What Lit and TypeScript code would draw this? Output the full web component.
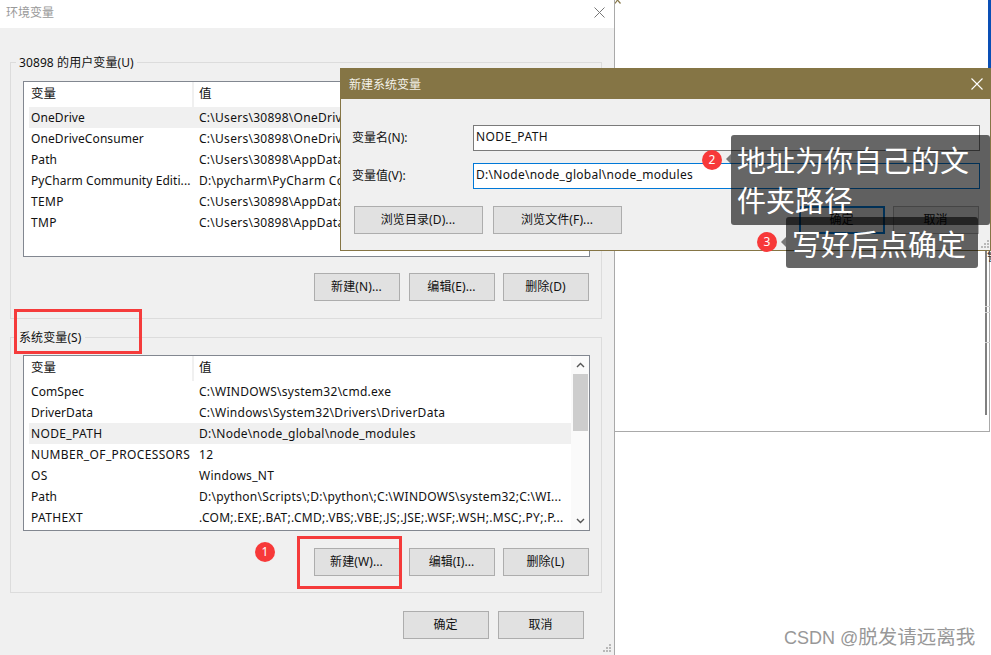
import { LitElement, html, css } from "lit";
import { customElement } from "lit/decorators.js";

const userVars: [string, string][] = [
  ["OneDrive", "C:\\Users\\30898\\OneDrive"],
  ["OneDriveConsumer", "C:\\Users\\30898\\OneDrive"],
  ["Path", "C:\\Users\\30898\\AppData\\Local\\Programs"],
  ["PyCharm Community Editi...", "D:\\pycharm\\PyCharm Community Edition"],
  ["TEMP", "C:\\Users\\30898\\AppData\\Local\\Temp"],
  ["TMP", "C:\\Users\\30898\\AppData\\Local\\Temp"],
];
const sysVars: [string, string][] = [
  ["ComSpec", "C:\\WINDOWS\\system32\\cmd.exe"],
  ["DriverData", "C:\\Windows\\System32\\Drivers\\DriverData"],
  ["NODE_PATH", "D:\\Node\\node_global\\node_modules"],
  ["NUMBER_OF_PROCESSORS", "12"],
  ["OS", "Windows_NT"],
  ["Path", "D:\\python\\Scripts\\;D:\\python\\;C:\\WINDOWS\\system32;C:\\WI..."],
  ["PATHEXT", ".COM;.EXE;.BAT;.CMD;.VBS;.VBE;.JS;.JSE;.WSF;.WSH;.MSC;.PY;.P..."],
];

@customElement("app-root")
export class AppRoot extends LitElement {
  static styles = css`
    :host {
      display: block;
      width: 991px;
      height: 655px;
      position: relative;
      overflow: hidden;
      background: #fff;
      font-family: "Noto Sans", "Noto Sans CJK SC", sans-serif;
      font-size: 12px;
      color: #111;
    }
    * { box-sizing: border-box; }
    .main {
      width: 615px;
      height: 655px;
      border-right: 1px solid #a9a9a9;
      background: #f0f0f0;
      display: flex;
      flex-direction: column;
      position: relative;
    }
    .main-title {
      height: 28px;
      flex: none;
      background: #fff;
      color: #999;
      padding: 0 0 4px 6px;
      display: flex;
      align-items: center;
      justify-content: space-between;
      font-size: 12px;
    }
    .main-title svg { margin-right: 9px; }
    .main-body { padding: 26px 0 0 10px; flex: 1; }
    .group {
      width: 592px;
      margin: 0;
      border: 1px solid #dcdcdc;
      padding: 10px 12px 18px;
      min-inline-size: 0;
    }
    .group.first { padding-top: 11px; height: 265px; }
    .group.second { margin-top: 10px; height: 264px; }
    legend {
      padding: 0 3px;
      margin: 0 0 0 -7px;
      line-height: 18px;
      height: 16px;
      letter-spacing: 0.1px;
    }
    .list {
      width: 567px;
      height: 176px;
      background: #fff;
      border: 1px solid #828790;
      display: flex;
      overflow: hidden;
    }
    .rows { flex: 1; min-width: 0; padding-left: 5px; }
    .head, .row { display: grid; white-space: nowrap; }
    .head {
      grid-template-columns: 161px 1fr;
      height: 25px;
      line-height: 24px;
      padding-left: 2px;
      font-size: 12.5px;
    }
    .head div + div {
      height: 25px;
      border-left: 2px solid #f0f0f0;
      padding-left: 5px;
    }
    .row {
      grid-template-columns: 164px 1fr;
      height: 21px;
      line-height: 22px;
      padding-left: 2px;
      letter-spacing: 0.08px;
    }
    .row .caps { letter-spacing: 0.36px; }
    .row div + div { padding-left: 4px; overflow: hidden; letter-spacing: 0.27px; }
    .row.sel { background: #f0f0f0; }
    .scroll {
      width: 18px;
      flex: none;
      background: #fafafa;
      display: flex;
      flex-direction: column;
      align-items: center;
      justify-content: space-between;
      padding: 0 1px;
    }
    .arrow { height: 18px; flex: none; display: flex; align-items: center; justify-content: center; }
    .thumb-track { flex: 1; width: 100%; }
    .thumb { width: 15px; height: 57px; background: #cdcdcd; margin: 0 auto; }
    .btns { display: flex; justify-content: flex-end; gap: 9px; margin-top: 16px; }
    .second .btns { margin-top: 17px; }
    .btn {
      width: 86px;
      height: 28px;
      border: 1px solid #adadad;
      background: #e1e1e1;
      display: flex;
      align-items: center;
      justify-content: center;
      font-size: 12px;
      letter-spacing: 0.1px;
      padding: 0 1px 2px 0;
      color: #111;
      flex: none;
    }
    .btns .tight { margin-left: -1px; }
    .footer { display: flex; gap: 9px; margin: 18px 0 0 393px; }
    .grip { position: absolute; right: 2px; bottom: 2px; }

    .back {
      position: absolute;
      left: 614px;
      top: 0;
      width: 376px;
      height: 432px;
      border-right: 1px solid #a9a9a9;
      border-bottom: 1px solid #a9a9a9;
    }
    .blue { position: absolute; left: 374px; top: 0; width: 3px; height: 68px; background: #0a4fb5; }
    .vbar { position: absolute; left: 371px; top: 250px; width: 2px; height: 165px; background: #808080; }
    .tick { position: absolute; left: 371px; width: 5px; height: 1px; background: #d0d0d0; }
    .caret { position: absolute; left: 0; top: -1px; }
    .clip { position: absolute; left: 373px; top: 249px; font-size: 12px; line-height: 16px; color: #222; }

    .modal {
      position: absolute;
      left: 340px;
      top: 68px;
      width: 651px;
      height: 183px;
      border: 1px solid #857545;
      background: #f0f0f0;
      display: flex;
      flex-direction: column;
    }
    .modal-title {
      height: 30px;
      flex: none;
      background: #857545;
      color: #f4f2ea;
      display: flex;
      align-items: center;
      justify-content: space-between;
      padding: 0 7px 0 8px;
    }
    .modal-body { padding: 26px 10px 0 11px; display: flex; flex-direction: column; }
    .field { display: grid; grid-template-columns: 121px 1fr; align-items: center; margin-bottom: 12px; }
    .field span { padding-bottom: 2px; }
    .input {
      height: 26px;
      border: 1px solid #7a7a7a;
      background: #fff;
      padding: 0 2px 2px;
      line-height: 22px;
      letter-spacing: 0.28px;
    }
    .input.caps { letter-spacing: 0.42px; }
    .input.focus { border-color: #0078d7; }
    .modal-btns { display: flex; gap: 10px; margin: 5px 0 0 2px; }
    .modal-btns .btn { width: 129px; }
    .modal-btns .ok { width: 86px; border: 2px solid #0078d7; margin-left: auto; }
    .modal-btns .cancel { width: 86px; margin-left: -2px; margin-right: 1px; }
    .modal .grip { right: 0; bottom: 1px; }

    .redbox { position: absolute; border: 3px solid #f53b3b; }
    .red-a { left: 14px; top: 309px; width: 128px; height: 45px; }
    .red-b { left: 297px; top: 536px; width: 105px; height: 53px; }
    .badge {
      position: absolute;
      width: 20px;
      height: 20px;
      border-radius: 50%;
      background: #f73939;
      color: #fff;
      font-size: 12px;
      line-height: 20px;
      text-align: center;
    }
    .b1 { left: 255px; top: 542px; }
    .b2 { left: 702px; top: 150px; }
    .b3 { left: 757px; top: 232px; }
    .tip {
      position: absolute;
      background: rgba(0, 0, 0, 0.6);
      color: #fff;
      border-radius: 3px;
      font-size: 29px;
      line-height: 40px;
    }
    .tip::before {
      content: "";
      position: absolute;
      left: -5px;
      border: 5px solid transparent;
      border-left: 0;
      border-right-color: rgba(0, 0, 0, 0.5);
    }
    .t2 { left: 731px; top: 135px; width: 259px; height: 90px; padding: 6px 6px 0 6px; }
    .t2::before { top: 19px; }
    .t3 { left: 786px; top: 217px; width: 192px; height: 51px; padding: 8px 6px 0 6px; white-space: nowrap; }
    .t3::before { top: 20px; }
    .mark {
      position: absolute;
      left: 784px;
      top: 625px;
      font-family: "Liberation Sans", "Noto Sans CJK SC", sans-serif;
      font-size: 19.5px;
      line-height: 24px;
      color: #989898;
      white-space: nowrap;
    }
    .mark span { font-size: 18px; }
  `;

  private list(rows: [string, string][], sel: number, scroll: boolean) {
    return html`<div class="list">
      <div class="rows">
        <div class="head"><div>变量</div><div>值</div></div>
        ${rows.map(
          (r, i) => html`<div class="row ${i === sel ? "sel" : ""}">
            <div class="${r[0] === r[0].toUpperCase() ? "caps" : ""}">${r[0]}</div><div>${r[1]}</div>
          </div>`
        )}
      </div>
      ${scroll
        ? html`<div class="scroll">
            <div class="arrow"><svg width="9" height="6" viewBox="0 0 9 6"><path d="M1 5l3.500-3.500L8 5" fill="none" stroke="#555" stroke-width="1.4"/></svg></div>
            <div class="thumb-track"><div class="thumb"></div></div>
            <div class="arrow"><svg width="9" height="6" viewBox="0 0 9 6"><path d="M1 1l3.500 3.500L8 1" fill="none" stroke="#555" stroke-width="1.4"/></svg></div>
          </div>`
        : ""}
    </div>`;
  }

  private grip() {
    return html`<svg class="grip" width="10" height="10" viewBox="0 0 10 10" fill="#b8b8b8"><rect x="7" y="1" width="2" height="2"/><rect x="4" y="4" width="2" height="2"/><rect x="7" y="4" width="2" height="2"/><rect x="1" y="7" width="2" height="2"/><rect x="4" y="7" width="2" height="2"/><rect x="7" y="7" width="2" height="2"/></svg>`;
  }

  render() {
    return html`
      <div class="back">
        <svg class="caret" width="8" height="5" viewBox="0 0 8 5"><path d="M1 4.500L3.500 1 6.500 4.500" fill="none" stroke="#857545" stroke-width="1.2"/></svg>
        <div class="blue"></div>
        <div class="vbar"></div>
        <div class="clip">警</div>
        <div class="tick" style="top:306px"></div>
        <div class="tick" style="top:312px"></div>
        <div class="tick" style="top:342px"></div>
      </div>
      <div class="main">
        <div class="main-title">
          <span>环境变量</span>
          <svg width="11" height="11" viewBox="0 0 11 11"><path d="M.5.5l10 10M10.500.5l-10 10" stroke="#777" fill="none"/></svg>
        </div>
        <div class="main-body">
          <fieldset class="group first">
            <legend>30898 的用户变量(U)</legend>
            ${this.list(userVars, 0, false)}
            <div class="btns">
              <div class="btn">新建(N)...</div>
              <div class="btn">编辑(E)...</div>
              <div class="btn tight">删除(D)</div>
            </div>
          </fieldset>
          <fieldset class="group second">
            <legend>系统变量(S)</legend>
            ${this.list(sysVars, 2, true)}
            <div class="btns">
              <div class="btn">新建(W)...</div>
              <div class="btn">编辑(I)...</div>
              <div class="btn tight">删除(L)</div>
            </div>
          </fieldset>
          <div class="footer">
            <div class="btn">确定</div>
            <div class="btn">取消</div>
          </div>
        </div>
        ${this.grip()}
      </div>
      <div class="modal">
        <div class="modal-title">
          <span>新建系统变量</span>
          <svg width="12" height="12" viewBox="0 0 12 12"><path d="M.5.5l11 11M11.500.5l-11 11" stroke="#fff" stroke-width="1.1" fill="none"/></svg>
        </div>
        <div class="modal-body">
          <div class="field"><span>变量名(N):</span><div class="input caps">NODE_PATH</div></div>
          <div class="field"><span>变量值(V):</span><div class="input focus">D:\\Node\\node_global\\node_modules</div></div>
          <div class="modal-btns">
            <div class="btn">浏览目录(D)...</div>
            <div class="btn">浏览文件(F)...</div>
            <div class="btn ok">确定</div>
            <div class="btn cancel">取消</div>
          </div>
        </div>
        ${this.grip()}
      </div>
      <div class="redbox red-a"></div>
      <div class="redbox red-b"></div>
      <div class="badge b1">1</div>
      <div class="badge b2">2</div>
      <div class="badge b3">3</div>
      <div class="tip t2">地址为你自己的文件夹路径</div>
      <div class="tip t3">写好后点确定</div>
      <div class="mark"><span>CSDN @</span>脱发请远离我</div>
    `;
  }
}
